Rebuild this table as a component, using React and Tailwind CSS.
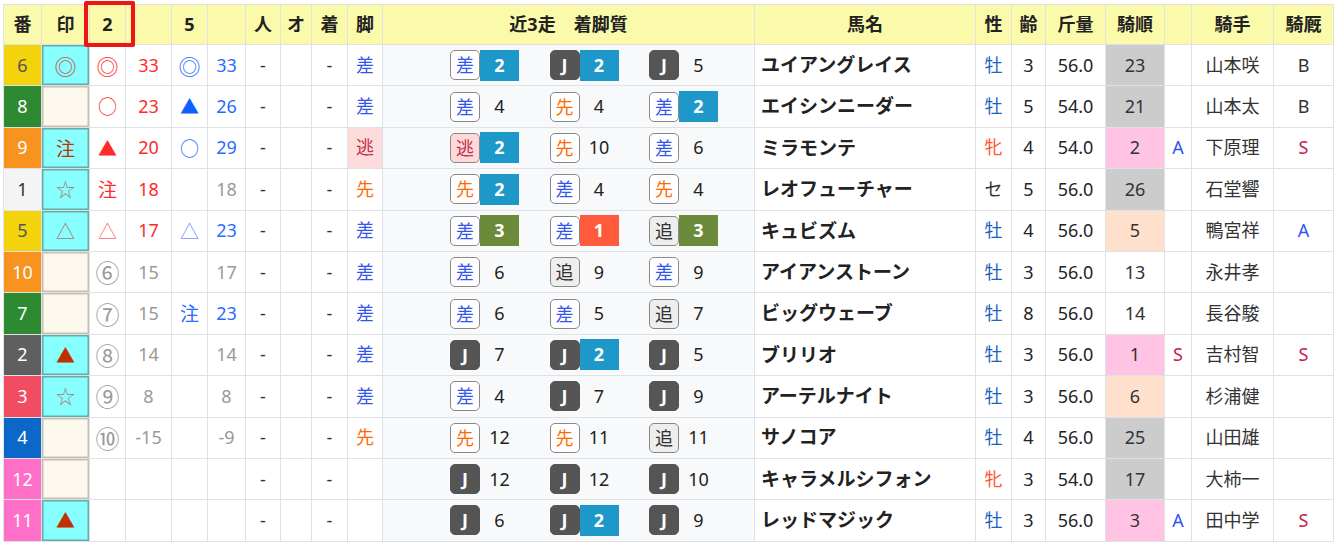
import React from 'react';

const FONT = "font-[family-name:'Noto_Sans','Noto_Sans_CJK_JP',sans-serif]";
const CJK = "font-[family-name:'Noto_Sans_CJK_JP',sans-serif]";

const COLS = [
  'w-[38px]', 'w-[48px]', 'w-[36px]', 'w-[46px]', 'w-[36px]', 'w-[38px]', 'w-[35px]', 'w-[31px]',
  'w-[36px]', 'w-[35px]', 'w-[372px]', 'w-[221px]', 'w-[36px]', 'w-[34px]', 'w-[60px]', 'w-[59px]',
  'w-[27px]', 'w-[82px]', 'w-[60px]',
];

const HEAD = ['番', '印', '2', '', '5', '', '人', 'オ', '着', '脚', '近3走　着脚質', '馬名', '性', '齢', '斤量', '騎順', '', '騎手', '騎厩'];

const FRAME = {
  1: 'bg-[#f4f4f4] text-[#333]',
  2: 'bg-[#5f5f5f] text-white',
  3: 'bg-[#f04d63] text-white',
  4: 'bg-[#0b68c9] text-white',
  5: 'bg-[#f2d30c] text-[#555]',
  6: 'bg-[#f2d30c] text-[#555]',
  7: 'bg-[#2e8a30] text-white',
  8: 'bg-[#2e8a30] text-white',
  9: 'bg-[#f7931e] text-white',
  10: 'bg-[#f7931e] text-white',
  11: 'bg-[#ff6fc8] text-white',
  12: 'bg-[#ff6fc8] text-white',
};

const MARK = {
  '◎': 'text-[#c0504a]',
  '注': 'text-[#c03000]',
  '☆': 'text-[#a08080]',
  '△': 'text-[#b07070]',
  '▲': 'text-[#c03000]',
};

// glyphs that come out small in the CJK font
const big = (ch) => {
  if (ch === '◎') return 'text-[22px] leading-none';
  if (ch && '⑥⑦⑧⑨⑩'.includes(ch)) return 'text-[24px] leading-none';
  return 'text-[19px]';
};

const RED = 'text-[#ff2a2a]';
const RED_LIGHT = 'text-[#ff6b6b]';
const BLUE = 'text-[#2a6cff]';
const BLUE_LIGHT = 'text-[#7a90ff]';
const GRAY = 'text-[#999]';

const LEG = {
  差: 'text-[#3355ee]',
  先: 'text-[#ff6a00]',
  逃: 'text-[#c0304a] bg-[#ffdcdc]',
};

const BADGE = {
  差: 'bg-white text-[#3355ee] border-[#888]',
  先: 'bg-white text-[#ff6a00] border-[#888]',
  追: 'bg-[#eeeeee] text-[#333] border-[#888]',
  逃: 'bg-[#ffd9d9] text-[#c0304a] border-[#888]',
  J: 'bg-[#555] text-white font-bold border-[#555]',
};

const RANK = { 1: 'bg-[#ff5a3c]', 2: 'bg-[#1e98c8]', 3: 'bg-[#6b8a3a]' };

const JUN = {
  gray: 'bg-[#cccccc]',
  pink: 'bg-[#ffc4e4]',
  peach: 'bg-[#ffe0cc]',
  none: '',
};

const SUB = { A: 'text-[#3355ee]', S: 'text-[#c8204a]', B: 'text-[#333]' };

const SEX = { 牡: 'text-[#1f5fbf]', 牝: 'text-[#ff5533]', セ: 'text-[#333]' };

const ROWS = [
  { no: 6, mark: '◎', c2: ['◎', RED], n2: ['33', RED], c5: ['◎', BLUE], n5: ['33', BLUE], leg: '差', runs: [['差', 2], ['J', 2], ['J', 5]], name: 'ユイアングレイス', sex: '牡', age: 3, kin: '56.0', jun: [23, 'gray'], sub: '', jockey: '山本咲', kyu: 'B' },
  { no: 8, mark: '', c2: ['○', RED], n2: ['23', RED], c5: ['▲', 'text-[#1060ff]'], n5: ['26', BLUE], leg: '差', runs: [['差', 4], ['先', 4], ['差', 2]], name: 'エイシンニーダー', sex: '牡', age: 5, kin: '54.0', jun: [21, 'gray'], sub: '', jockey: '山本太', kyu: 'B' },
  { no: 9, mark: '注', c2: ['▲', RED], n2: ['20', RED], c5: ['○', BLUE], n5: ['29', BLUE], leg: '逃', runs: [['逃', 2], ['先', 10], ['差', 6]], name: 'ミラモンテ', sex: '牝', age: 4, kin: '54.0', jun: [2, 'pink'], sub: 'A', jockey: '下原理', kyu: 'S' },
  { no: 1, mark: '☆', c2: ['注', RED], n2: ['18', RED], c5: ['', ''], n5: ['18', GRAY], leg: '先', runs: [['先', 2], ['差', 4], ['先', 4]], name: 'レオフューチャー', sex: 'セ', age: 5, kin: '56.0', jun: [26, 'gray'], sub: '', jockey: '石堂響', kyu: '' },
  { no: 5, mark: '△', c2: ['△', RED_LIGHT], n2: ['17', RED], c5: ['△', BLUE_LIGHT], n5: ['23', BLUE], leg: '差', runs: [['差', 3], ['差', 1], ['追', 3]], name: 'キュビズム', sex: '牡', age: 4, kin: '56.0', jun: [5, 'peach'], sub: '', jockey: '鴨宮祥', kyu: 'A' },
  { no: 10, mark: '', c2: ['⑥', GRAY], n2: ['15', GRAY], c5: ['', ''], n5: ['17', GRAY], leg: '差', runs: [['差', 6], ['追', 9], ['差', 9]], name: 'アイアンストーン', sex: '牡', age: 3, kin: '56.0', jun: [13, 'none'], sub: '', jockey: '永井孝', kyu: '' },
  { no: 7, mark: '', c2: ['⑦', GRAY], n2: ['15', GRAY], c5: ['注', BLUE], n5: ['23', BLUE], leg: '差', runs: [['差', 6], ['差', 5], ['追', 7]], name: 'ビッグウェーブ', sex: '牡', age: 8, kin: '56.0', jun: [14, 'none'], sub: '', jockey: '長谷駿', kyu: '' },
  { no: 2, mark: '▲', c2: ['⑧', GRAY], n2: ['14', GRAY], c5: ['', ''], n5: ['14', GRAY], leg: '差', runs: [['J', 7], ['J', 2], ['J', 5]], name: 'ブリリオ', sex: '牡', age: 3, kin: '56.0', jun: [1, 'pink'], sub: 'S', jockey: '吉村智', kyu: 'S' },
  { no: 3, mark: '☆', c2: ['⑨', GRAY], n2: ['8', GRAY], c5: ['', ''], n5: ['8', GRAY], leg: '差', runs: [['差', 4], ['J', 7], ['J', 9]], name: 'アーテルナイト', sex: '牡', age: 3, kin: '56.0', jun: [6, 'peach'], sub: '', jockey: '杉浦健', kyu: '' },
  { no: 4, mark: '', c2: ['⑩', GRAY], n2: ['-15', GRAY], c5: ['', ''], n5: ['-9', GRAY], leg: '先', runs: [['先', 12], ['先', 11], ['追', 11]], name: 'サノコア', sex: '牡', age: 4, kin: '56.0', jun: [25, 'gray'], sub: '', jockey: '山田雄', kyu: '' },
  { no: 12, mark: '', c2: ['', ''], n2: ['', ''], c5: ['', ''], n5: ['', ''], leg: '', runs: [['J', 12], ['J', 12], ['J', 10]], name: 'キャラメルシフォン', sex: '牝', age: 3, kin: '54.0', jun: [17, 'gray'], sub: '', jockey: '大柿一', kyu: '' },
  { no: 11, mark: '▲', c2: ['', ''], n2: ['', ''], c5: ['', ''], n5: ['', ''], leg: '', runs: [['J', 6], ['J', 2], ['J', 9]], name: 'レッドマジック', sex: '牡', age: 3, kin: '56.0', jun: [3, 'pink'], sub: 'A', jockey: '田中学', kyu: 'S' },
];

const td = 'border border-[#dee2e6] p-0 text-center h-[41.4px]';

function Run({ style, rank }) {
  const box = RANK[rank];
  return (
    <div className="flex items-center w-[99.5px] shrink-0">
      <span className={`w-[30px] h-[30px] rounded-[5px] border flex items-center justify-center text-[18px] leading-none ${BADGE[style]}`}>
        {style}
      </span>
      {box ? (
        <span className={`w-[39px] h-[31px] flex items-center justify-center text-white font-bold text-[18px] ${box}`}>{rank}</span>
      ) : (
        <span className="w-[39px] text-center text-[18px] text-[#222]">{rank}</span>
      )}
    </div>
  );
}

export default function App() {
  return (
    <div className={`pt-[4px] pl-[3px] bg-white text-[#212529] text-[18px] ${FONT}`}>
      <table className="table-fixed border-collapse w-[1330px]">
        <colgroup>
          {COLS.map((c, i) => (
            <col key={i} className={c} />
          ))}
        </colgroup>
        <thead>
          <tr>
            {HEAD.map((h, i) => (
              <th
                key={i}
                className={`border border-[#dee2e6] bg-[#fafaaa] h-[40px] p-0 font-bold text-[18px] text-[#222] ${i === 2 ? 'relative' : ''}`}
              >
                {h}
                {i === 2 && (
                  <span className="absolute z-10 left-[-6px] top-[-4px] w-[51px] h-[46px] border-4 border-[#f01414] rounded-[2px]" />
                )}
              </th>
            ))}
          </tr>
        </thead>
        <tbody>
          {ROWS.map((r) => (
            <tr key={r.no}>
              <td className={`${td} ${FRAME[r.no]}`}>{r.no}</td>
              <td
                className={`${td} ${CJK} ${big(r.mark)} ${
                  r.mark === ''
                    ? 'bg-[#fdf9ee] shadow-[inset_0_0_0_1.5px_#c8c0b0]'
                    : 'bg-[#88ffff] shadow-[inset_0_0_0_1.5px_#66aaaa]'
                } ${MARK[r.mark] || ''}`}
              >
                {r.mark}
              </td>
              <td className={`${td} ${CJK} ${big(r.c2[0])} ${r.c2[1]}`}>{r.c2[0]}</td>
              <td className={`${td} ${r.n2[1]}`}>{r.n2[0]}</td>
              <td className={`${td} ${CJK} ${big(r.c5[0])} ${r.c5[1]}`}>{r.c5[0]}</td>
              <td className={`${td} ${r.n5[1]}`}>{r.n5[0]}</td>
              <td className={`${td} text-[#333]`}>-</td>
              <td className={td}></td>
              <td className={`${td} text-[#333]`}>-</td>
              <td className={`${td} ${LEG[r.leg] || ''}`}>{r.leg}</td>
              <td className={`${td} bg-[#f8f9fa]`}>
                <div className="flex items-center pl-[67px]">
                  {r.runs.map(([s, n], i) => (
                    <Run key={i} style={s} rank={n} />
                  ))}
                </div>
              </td>
              <td className={`${td} text-left pl-[6px] font-semibold text-[19px] text-[#222]`}>{r.name}</td>
              <td className={`${td} ${SEX[r.sex]}`}>{r.sex}</td>
              <td className={td}>{r.age}</td>
              <td className={td}>{r.kin}</td>
              <td className={`${td} text-[#333] ${JUN[r.jun[1]]}`}>{r.jun[0]}</td>
              <td className={`${td} ${SUB[r.sub] || ''}`}>{r.sub}</td>
              <td className={`${td} text-[#333]`}>{r.jockey}</td>
              <td className={`${td} ${SUB[r.kyu] || ''}`}>{r.kyu}</td>
            </tr>
          ))}
        </tbody>
      </table>
    </div>
  );
}
